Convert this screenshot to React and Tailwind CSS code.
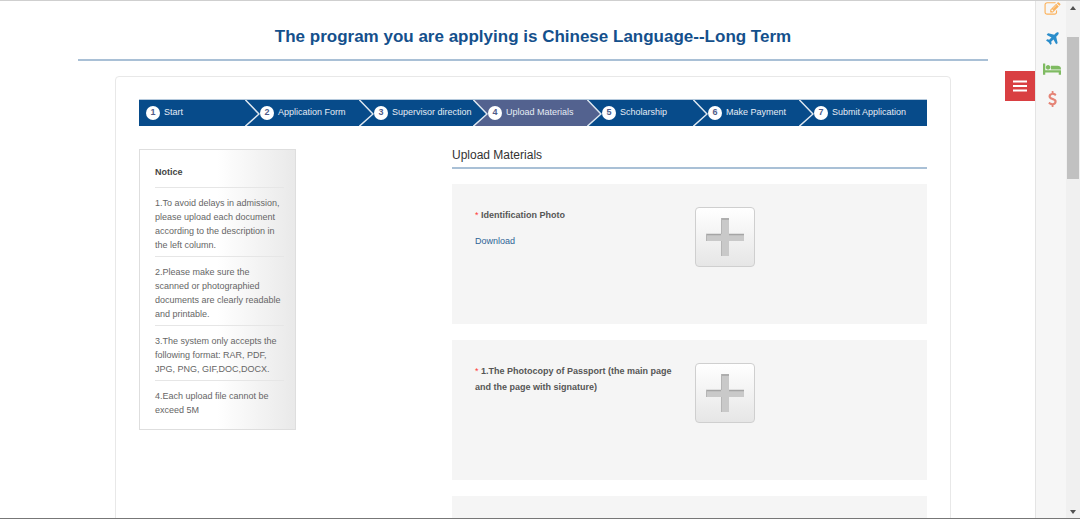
import React, { useState } from "react";

const steps = [
  "Start",
  "Application Form",
  "Supervisor direction",
  "Upload Materials",
  "Scholarship",
  "Make Payment",
  "Submit Application",
];

const notices = [
  "1.To avoid delays in admission, please upload each document according to the description in the left column.",
  "2.Please make sure the scanned or photographied documents are clearly readable and printable.",
  "3.The system only accepts the following format: RAR, PDF, JPG, PNG, GIF,DOC,DOCX.",
  "4.Each upload file cannot be exceed 5M",
];

const materials = [
  { id: "photo", label: "Identification Photo", download: true },
  { id: "passport", label: "1.The Photocopy of Passport (the main page and the page with signature)" },
  { id: "other", label: "" },
];

const shortcuts = [
  {
    name: "Apply",
    color: "text-[#fbb25c]",
    size: "h-4 w-[17px]",
    box: "0 0 1792 1792",
    d: "M888 1184l116-116-152-152-116 116v56h96v96h56zm440-720q-16-16-33 1l-350 350q-17 17-1 33t33-1l350-350q17-17 1-33zm80 594v190q0 119-84.5 203.5t-203.5 84.5h-832q-119 0-203.5-84.5t-84.5-203.5v-832q0-119 84.5-203.5t203.5-84.5h832q63 0 117 25 15 7 18 23 3 17-9 29l-49 49q-14 14-32 8-23-6-45-6h-832q-66 0-113 47t-47 113v832q0 66 47 113t113 47h832q66 0 113-47t47-113v-126q0-13 9-22l64-64q15-15 35-7t20 29zm-96-738l288 288-672 672h-288v-288zm444 132l-92 92-288-288 92-92q28-28 68-28t68 28l152 152q28 28 28 68t-28 68z",
  },
  {
    name: "Travel",
    color: "text-[#2a8dcb]",
    size: "h-4 w-[17px]",
    box: "0 0 1792 1792",
    d: "M1568 160q44 52 12 148t-108 172l-161 161 160 696q5 19-12 33l-128 96q-7 6-19 6-4 0-7-1-15-3-21-16l-279-508-259 259 53 194q5 17-8 31l-96 96q-9 9-23 9h-2q-15-2-24-13l-189-252-252-189q-11-7-13-23-1-13 9-25l96-97q9-9 23-9 6 0 8 1l194 53 259-259-508-279q-14-8-17-24-2-16 9-27l128-128q14-13 30-8l665 159 160-160q76-76 172-108t148 12z",
  },
  {
    name: "Accommodation",
    color: "text-[#7fbb62]",
    size: "h-4 w-[18px]",
    box: "0 0 2048 1792",
    d: "M256 1024h1728q26 0 45 19t19 45v448h-256v-256h-1536v256h-256v-1216q0-26 19-45t45-19h128q26 0 45 19t19 45v704zm576-320q0-106-75-181t-181-75-181 75-75 181 75 181 181 75 181-75 75-181zm1216 256v-64q0-159-112.5-271.5t-271.5-112.5h-704q-26 0-45 19t-19 45v384h1152z",
  },
  {
    name: "Payment",
    color: "text-[#e58476]",
    size: "h-4 w-[17px]",
    box: "0 0 1792 1792",
    d: "M1362 1185q0 153-99.5 263.5t-258.5 136.5v175q0 14-9 23t-23 9h-135q-13 0-22.5-9.5t-9.5-22.5v-175q-66-9-127.5-31t-101.5-44.5-74-48-46.500-37.5-17.5-18q-17-21-2-41l103-135q7-10 23-12 15-2 24 9l2 2q113 99 243 125 37 8 74 8 81 0 142.5-43t61.5-122q0-28-15-53t-33.5-42-58.5-37.5-66-32-80-32.5q-39-16-61.5-25t-61.5-26.5-62.5-31-56.5-35.5-53.5-42.5-43.5-49-35.5-58-21-66.5-8.5-78q0-138 98-242t255-134v-180q0-13 9.5-22.5t22.5-9.5h135q14 0 23 9t9 23v176q57 6 110.5 23t87 33.5 63.5 37.5 39 29 15 14q17 18 5 38l-81 146q-8 15-23 16-14 3-27-7-3-3-14.5-12t-39-26.5-58.5-32-74.5-26-85.5-11.5q-95 0-155 43t-60 111q0 26 8.5 48t29.5 41.5 39.5 33 56 31 60.5 27 70 27.5q53 20 81 31.5t76 35 75.5 42.5 62 50 53 63.5 31.5 76.5 13 94z",
  },
];

const StepBar = ({ current }) => {
  const fill = (i) => (i === current ? "#53628f" : "#074b8a");

  return (
    <ol className="grid grid-cols-[114fr_114fr_114fr_114fr_106fr_106fr_120fr] border-t border-[#b5c9dc] text-[9px] text-[#e6edf5]">
      {steps.map((step, i) => (
        <li
          key={step}
          aria-current={i === current ? "step" : undefined}
          className={`relative flex h-[26px] min-w-0 items-center gap-1 pl-[7px] whitespace-nowrap ${i === current ? "bg-[#53628f]" : "bg-[#074b8a]"}`}
        >
          {/* chevron over the seam with the previous step */}
          {i > 0 && (
            <svg className="absolute top-0 -left-2 h-full w-[15px]" viewBox="0 0 15 26" aria-hidden="true">
              <rect width="15" height="26" fill={fill(i)} />
              <path d="M0 0L14 14 0 26z" fill={fill(i - 1)} />
              <path d="M0 -0.5L14 14 0 26.500" fill="none" stroke="#dfe8f1" strokeWidth="1.5" />
            </svg>
          )}
          <span className="relative flex size-[14px] shrink-0 items-center justify-center rounded-full bg-white font-bold text-[#4f5b88]">
            {i + 1}
          </span>
          <span>{step}</span>
        </li>
      ))}
    </ol>
  );
};

const Notice = () => (
  <aside className="w-[157px] shrink-0 self-start border border-[#dedede] bg-linear-to-r from-white from-50% to-[#e9e9e9] pt-[15px] pr-[11px] pb-2 pl-[15px]">
    <h2 className="pb-2 text-[9px] leading-[14px] font-bold text-[#444]">Notice</h2>
    {notices.map((text) => (
      <p key={text} className="border-t border-[#e6e6e6] pt-2 pb-1 text-[9px] leading-[14px] text-[#666]">
        {text}
      </p>
    ))}
  </aside>
);

const UploadButton = ({ label }) => (
  <button
    type="button"
    aria-label={`Upload ${label}`}
    className="flex size-[60px] shrink-0 items-center justify-center rounded border border-[#cfcfcf] bg-linear-to-b from-white to-[#e6e6e6]"
  >
    <svg className="size-10" viewBox="0 0 40 40" aria-hidden="true">
      <path d="M16 1h8v16h15v7H24v15h-8V24H1v-7h15z" fill="#c9c9c9" />
      <path d="M16 2h8M1 17.500h15M24 17.500h15" stroke="#a5a5a5" strokeWidth="1.5" />
      <path d="M16.500 1v16M16.500 24v15M1.500 17v7" stroke="#b5b5b5" />
    </svg>
  </button>
);

const Material = ({ label, download }) => (
  <li className="flex h-[140px] gap-5 bg-[#f5f5f5] p-[23px]">
    <div className="w-[200px] shrink-0 text-[9px] leading-4">
      {label && (
        <p className="font-bold text-[#555]">
          <span className="font-normal text-[#ff3b3b]">*</span> {label}
        </p>
      )}
      {download && (
        <a href="#download" className="mt-2.5 inline-block text-[#2f6496]">
          Download
        </a>
      )}
    </div>
    <UploadButton label={label} />
  </li>
);

const SideTools = () => {
  const [open, setOpen] = useState(true);

  return (
    <div className="flex shrink-0">
      <button
        type="button"
        aria-label="Toggle shortcuts"
        onClick={() => setOpen((o) => !o)}
        className="mt-[70px] flex size-[30px] items-center justify-center self-start bg-[#d93f42] text-white"
      >
        <svg className="h-3 w-3.5" viewBox="0 0 14 12" aria-hidden="true">
          <path d="M0 1.500h14M0 6h14M0 10.500h14" stroke="currentColor" strokeWidth="2" />
        </svg>
      </button>
      {open && (
        <nav className="flex w-[31px] flex-col items-center gap-[14px] border-l border-[#e4e4e4] bg-[#f6f6f6] pl-0.5">
          {shortcuts.map((s) => (
            <a key={s.name} href="#shortcut" aria-label={s.name} className={s.color}>
              <svg className={s.size} viewBox={s.box} fill="currentColor" aria-hidden="true">
                <path d={s.d} />
              </svg>
            </a>
          ))}
        </nav>
      )}
    </div>
  );
};

const ScrollTrack = () => (
  <div className="flex w-3.5 shrink-0 flex-col items-center justify-between bg-[#f0f0f0] pt-[5px] pb-1" aria-hidden="true">
    <div className="flex flex-col items-center">
      <svg className="h-1 w-1.5" viewBox="0 0 6 4">
        <path d="M0 4L3 0l3 4z" fill="#505050" />
      </svg>
      <div className="mt-[27px] h-[142px] w-3 bg-[#c1c1c1]" />
    </div>
    <svg className="h-1 w-1.5" viewBox="0 0 6 4">
      <path d="M0 0l3 4 3-4z" fill="#505050" />
    </svg>
  </div>
);

const App = () => (
  <div className="flex h-screen overflow-hidden border-t border-b border-t-[#cfcfcf] border-b-[#777] bg-white font-['Liberation_Sans',Arial,sans-serif]">
    <main className="min-w-0 flex-1 pr-[17px] pl-[78px]">
      <h1 className="border-b-2 border-[#a9c0d6] pt-6 pb-[10px] text-center text-[17px] leading-6 font-bold text-[#14508c]">
        The program you are applying is Chinese Language--Long Term
      </h1>

      <div className="mx-[37px] mt-[15px] rounded border border-[#e8e8e8] px-[23px] pt-[22px]">
        <StepBar current={3} />

        <div className="mt-[23px] flex justify-between">
          <Notice />
          <section className="w-[475px]">
            <h2 className="border-b-2 border-[#a9c0d6] pb-1.5 text-xs leading-3 text-[#333]">Upload Materials</h2>
            <ul className="mt-[15px] flex flex-col gap-4">
              {materials.map((m) => (
                <Material key={m.id} label={m.label} download={m.download} />
              ))}
            </ul>
          </section>
        </div>
      </div>
    </main>
    <SideTools />
    <ScrollTrack />
  </div>
);

export default App;
